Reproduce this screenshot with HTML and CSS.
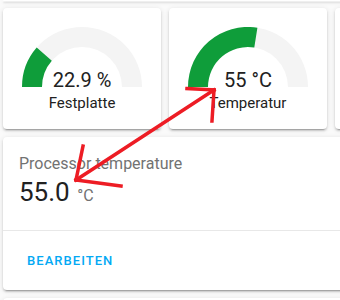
FILE: index.html
```html
<!DOCTYPE html>
<html lang="en">

<head>
  <meta charset="UTF-8" />
  <meta name="viewport" content="width=device-width, initial-scale=1.0" />
  <title>Gauges</title>
  <link rel="stylesheet" href="styles.css">
</head>

<body>
  <div class="page">
    <!-- bottom edge of the card above -->
    <div class="card card-above"></div>

    <div class="gauge-row">
      <div class="card gauge-card">
        <div class="gauge">
          <svg width="120" height="60" viewBox="0 0 120 60">
            <path d="M0 60 A60 60 0 0 1 120 60 L100 60 A40 40 0 0 0 20 60 Z" fill="#f4f4f4" />
            <path d="M0 60 A60 60 0 0 1 14.7 20.6 L29.8 33.8 A40 40 0 0 0 20 60 Z" fill="#0f9d3a" />
          </svg>
          <span class="gauge-value">22.9 %</span>
        </div>
        <div class="gauge-name">Festplatte</div>
      </div>

      <div class="card gauge-card">
        <div class="gauge">
          <svg width="120" height="60" viewBox="0 0 120 60">
            <path d="M0 60 A60 60 0 0 1 120 60 L100 60 A40 40 0 0 0 20 60 Z" fill="#f4f4f4" />
            <path d="M0 60 A60 60 0 0 1 69.4 0.7 L66.3 20.5 A40 40 0 0 0 20 60 Z" fill="#0f9d3a" />
          </svg>
          <span class="gauge-value">55 °C</span>
        </div>
        <div class="gauge-name">Temperatur</div>
      </div>

      <div class="card gauge-card"></div>
    </div>

    <div class="card entity-card">
      <div class="entity-body">
        <div class="entity-name">Processor temperature</div>
        <div class="entity-state">55.0 <span class="unit">°C</span></div>
      </div>
      <div class="entity-actions">
        <span class="edit-btn">Bearbeiten</span>
      </div>
    </div>

    <div class="card card-below"></div>
  </div>

  <!-- red annotation arrow drawn over the screenshot -->
  <svg class="annotation" width="340" height="300" viewBox="0 0 340 300">
    <g stroke="#ed1c24" stroke-width="3.5" stroke-linecap="square" fill="none">
      <line x1="76" y1="180" x2="214" y2="90" />
      <line x1="187" y1="88.5" x2="214" y2="90" />
      <line x1="214" y1="90" x2="212" y2="121" />
      <line x1="76" y1="180" x2="83" y2="146" />
      <line x1="76" y1="180" x2="121" y2="186" />
    </g>
  </svg>
</body>

</html>
```

FILE: styles.css
```css
body {
  margin: 0;
  background: #fafafa;
  font-family: Roboto, "Noto Sans", sans-serif;
  overflow: hidden;
  width: 340px;
  height: 300px;
}

.page {
  width: 560px;
  padding-left: 3px;
}

/* Material card look */
.card {
  background: #fff;
  border-radius: 4px;
  box-shadow: 0 2px 2px 0 rgba(0, 0, 0, 0.14), 0 1px 5px 0 rgba(0, 0, 0, 0.12), 0 3px 1px -2px rgba(0, 0, 0, 0.2);
}

.card-above {
  height: 1px;
  width: 490px;
  border-radius: 0 0 4px 4px;
}

.gauge-row {
  display: flex;
  gap: 8px;
  margin-top: 7px;
}

.gauge-card {
  width: 158px;
  height: 121px;
  flex-shrink: 0;
  display: flex;
  flex-direction: column;
  align-items: center;
  padding-top: 19px;
  box-sizing: border-box;
}

.gauge {
  position: relative;
  width: 120px;
  height: 60px;
}

.gauge svg {
  display: block;
}

/* value sits inside the arc */
.gauge-value {
  position: absolute;
  left: 0;
  right: 0;
  bottom: -5px;
  text-align: center;
  font-size: 20px;
  line-height: 24px;
  color: #212121;
}

.gauge-name {
  margin-top: 6px;
  font-size: 15px;
  line-height: 20px;
  color: #212121;
}

.entity-card {
  margin-top: 8px;
  width: 490px;
  height: 153px;
  display: flex;
  flex-direction: column;
}

.entity-body {
  height: 94px;
  padding: 15px 16px 0;
  box-sizing: border-box;
  border-bottom: 1px solid #e8e8e8;
}

.entity-name {
  font-size: 16px;
  line-height: 24px;
  color: #727272;
}

.entity-state {
  font-size: 26px;
  line-height: 32px;
  color: #212121;
}

.unit {
  font-size: 16px;
  color: #727272;
  margin-left: 1px;
}

.entity-actions {
  padding-left: 24px;
  flex: 1;
  display: flex;
  align-items: center;
}

.edit-btn {
  font-size: 13px;
  font-weight: 500;
  letter-spacing: 0.08em;
  text-transform: uppercase;
  color: #03a9f4;
}

.card-below {
  margin-top: 8px;
  width: 490px;
  height: 40px;
}

/* annotation overlay */
.annotation {
  position: absolute;
  left: 0;
  top: 0;
  pointer-events: none;
}
```
